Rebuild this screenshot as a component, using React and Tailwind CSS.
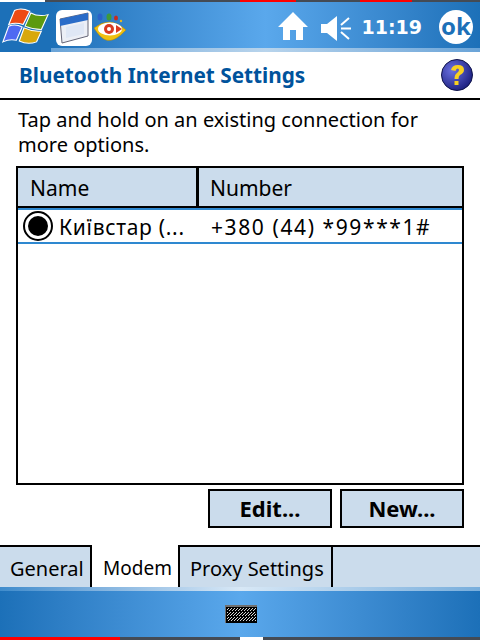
import React from "react";

const font = { fontFamily: '"Noto Sans", sans-serif' };

function Flag() {
  return (
    <svg width="48" height="38" viewBox="0 0 50 46" preserveAspectRatio="none" className="block">
      <path d="M13 3 Q20 -1 29 4 L22 20 Q14 17 7 20 Z" fill="#ee4a14" stroke="#fff" strokeWidth="1.2" />
      <path d="M30 6 Q38 11 48 8 L41 26 Q32 26 24 22 Z" fill="#5c9a10" stroke="#fff" strokeWidth="1.2" />
      <path d="M7 22 Q14 19 21 23 L15 39 Q8 37 1 41 Z" fill="#4f6af2" stroke="#fff" strokeWidth="1.2" />
      <path d="M23 24 Q32 29 41 28 L36 41 Q27 45 18 40 Z" fill="#d8a80c" stroke="#fff" strokeWidth="1.2" />
    </svg>
  );
}

function WindowIcon() {
  return (
    <div className="w-[36px] h-[36px] rounded-md bg-white flex items-center justify-center">
      <svg width="32" height="32" viewBox="0 0 32 32">
        <path d="M2 7 L30 1 V24 L4 31 Z" fill="#eceff6" stroke="#667" strokeWidth="1" />
        <path d="M2 7 L30 1 V8 L2 14 Z" fill="#2a6cc8" />
        <path d="M8 15 L26 11 V22 L8 26 Z" fill="#dfe7f5" />
      </svg>
    </div>
  );
}

function Eye() {
  return (
    <svg width="34" height="30" viewBox="0 0 34 30" className="block">
      <ellipse cx="6" cy="4" rx="2.5" ry="3.5" fill="#2a62c8" />
      <ellipse cx="15" cy="4" rx="2.5" ry="3.5" fill="#3f9a3a" />
      <ellipse cx="22" cy="5" rx="2" ry="2.5" fill="#c82a1c" />
      <circle cx="27" cy="8" r="1.2" fill="#e8b820" />
      <path d="M0 15 Q16 2 32 17 Q20 30 12 27 Q6 25 0 15 Z" fill="#f0c010" stroke="#a88008" strokeWidth="0.5" />
      <ellipse cx="16" cy="16" rx="12" ry="6.5" fill="#fff" />
      <circle cx="15" cy="16" r="5" fill="#d83a20" />
      <circle cx="15" cy="16" r="2" fill="#fff" />
      <path d="M22 12 L28 16 L22 20 Z" fill="#d83a20" />
    </svg>
  );
}

function Home() {
  return (
    <svg width="30" height="28" viewBox="0 0 30 28" className="block">
      <path d="M15 0 L30 15 H25 V28 H18 V18 H12 V28 H5 V15 H0 Z" fill="#fff" />
    </svg>
  );
}

function Speaker() {
  return (
    <svg width="30" height="25" viewBox="0 0 30 25" className="block">
      <path d="M0 8 H6 L16 0 V25 L6 17 H0 Z" fill="#fff" />
      <path d="M20 9 L28 2 M20 12.5 H30 M20 16 L28 23" stroke="#fff" strokeWidth="2" fill="none" />
    </svg>
  );
}

function Help() {
  return (
    <svg width="32" height="32" viewBox="0 0 32 32" className="block">
      <defs>
        <radialGradient id="hb" cx="35%" cy="35%" r="70%">
          <stop offset="0%" stopColor="#6a70e0" />
          <stop offset="100%" stopColor="#1c2080" />
        </radialGradient>
      </defs>
      <circle cx="16" cy="16" r="15.5" fill="url(#hb)" stroke="#10144a" strokeWidth="1" />
      <path d="M10 11 Q11 6 17 6 Q23 6 23 11 Q23 14 19 16 Q17.5 17 17.5 20 H13.5 Q13.5 15.5 16 14 Q18 12.5 18 11 Q18 9.5 16.5 9.5 Q15 9.5 14.5 12 Z" fill="#f8d020" />
      <rect x="13.5" y="22" width="4" height="4" fill="#f8d020" />
    </svg>
  );
}

function Keyboard() {
  const cells = [];
  for (let y = 1; y < 14; y++) {
    for (let x = 1; x < 30; x++) {
      if ((x + y) % 3 === 0 && y !== 4 && y !== 9) {
        cells.push(<rect key={x + "-" + y} x={x + 1} y={y + 2} width="1" height="1" fill="#d8d8d8" />);
      }
    }
  }
  return (
    <svg width="32" height="18" viewBox="0 0 32 18" className="block" shapeRendering="crispEdges">
      <rect width="32" height="18" fill="#707070" />
      <rect x="1" y="2" width="31" height="16" fill="#000" />
      {cells}
    </svg>
  );
}

const barGradient = "bg-gradient-to-r from-[#1c70b8] via-[#5aa8ec] to-[#1c70b8]";

export default function App() {
  return (
    <div className="w-[480px] h-[640px] bg-white flex flex-col overflow-hidden text-black" style={font}>
      <div className="h-[2px] bg-[#444b55] flex shrink-0">
        <div className="w-[45px] bg-white" />
        <div className="w-[195px]" />
        <div className="w-[56px] bg-[#ff0000]" />
        <div className="w-[64px]" />
        <div className="w-[52px] bg-[#ff0000]" />
      </div>
      <header className="h-[50px] shrink-0 flex">
        <div className="w-[51px] bg-[#1c70b8] flex items-center justify-center shrink-0 pb-[1px]">
          <Flag />
        </div>
        <div className={"flex-1 flex flex-col " + barGradient}>
          <div className="h-[46px] flex items-center">
            <div className="ml-[5px] mt-[6px]"><WindowIcon /></div>
            <div className="ml-[2px] mt-[6px]"><Eye /></div>
            <div className="flex-1" />
            <div className="mt-[2px]"><Home /></div>
            <div className="ml-[13px] mt-[6px]"><Speaker /></div>
            <span className="ml-[11px] mt-[4px] text-white font-bold text-[19px] leading-none" style={{ fontFamily: '"DejaVu Sans", sans-serif' }}>11:19</span>
            <div className="ml-[17px] mr-[7px] mt-[4px] w-[34px] h-[34px] rounded-full bg-white flex items-center justify-center text-[#1c70b8] font-bold text-[24px] leading-none pb-[3px]">ok</div>
          </div>
          <div className="h-[4px] bg-gradient-to-r from-[#6aa4d8] via-[#b8d4ec] to-[#6aa4d8]" />
        </div>
      </header>
      <div className="h-[48px] shrink-0 flex items-center justify-between pl-[19px] pr-[7px] border-b-2 border-black">
        <span className="font-bold text-[#00539c] text-[20.75px] leading-none">Bluetooth Internet Settings</span>
        <Help />
      </div>
      <p className="ml-[18px] w-[420px] pt-[7px] text-[20px] leading-[25px] h-[66px] shrink-0">Tap and hold on an existing connection for more options.</p>
      <div className="mx-[16px] h-[319px] shrink-0 border-2 border-black">
        <div className="h-[40px] flex bg-[#cbdcec] border-b-2 border-black text-[21px]">
          <div className="w-[181px] pl-[12px] pt-[3px] flex items-center border-r-[3px] border-black">Name</div>
          <div className="pl-[11px] pt-[3px] flex items-center">Number</div>
        </div>
        <div className="h-[36px] flex items-center border-y-2 border-[#2e88d0] text-[21px]">
          <div className="ml-[5px] w-[30px] h-[30px] rounded-full border-2 border-black bg-white flex items-center justify-center shrink-0">
            <div className="w-[20px] h-[20px] rounded-full bg-black" />
          </div>
          <span className="ml-[6px] w-[152px] pt-[3px] tracking-[0.7px]">Київстар (...</span>
          <span className="pt-[3px] tracking-[1.6px]">+380 (44) *99***1#</span>
        </div>
      </div>
      <div className="h-[39px] mt-[4px] shrink-0 flex justify-end gap-[8px] mr-[16px]">
        <button className="w-[124px] h-[39px] pb-[2px] bg-[#cbdcec] border-2 border-black font-bold text-[22px] leading-none">Edit...</button>
        <button className="w-[124px] h-[39px] pb-[2px] bg-[#cbdcec] border-2 border-black font-bold text-[22px] leading-none">New...</button>
      </div>
      <div className="flex-1" />
      <div className="h-[42px] shrink-0 flex border-t-2 border-black bg-[#cbdcec] text-[20px]">
        <div className="w-[92px] pl-[10px] pt-[3px] flex items-center border-r-2 border-black">General</div>
        <div className="w-[86px] -mt-[2px] bg-white pl-[11px] pt-[5px] flex items-center text-[19px]">Modem</div>
        <div className="w-[155px] pl-[10px] pt-[3px] flex items-center border-x-2 border-black">Proxy Settings</div>
      </div>
      <footer className={"h-[53px] shrink-0 flex flex-col " + barGradient}>
        <div className="h-[4px] bg-gradient-to-r from-[#3f8ccc] via-[#d8e8f6] to-[#78aedc]" />
        <div className="h-[46px] flex items-center justify-center">
          <div className="mb-[1px] ml-[2px]"><Keyboard /></div>
        </div>
        <div className="h-[3px] bg-[#444b55] flex">
          <div className="w-[120px] bg-[#ff0000]" />
          <div className="w-[120px]" />
          <div className="w-[23px] bg-white" />
        </div>
      </footer>
    </div>
  );
}
